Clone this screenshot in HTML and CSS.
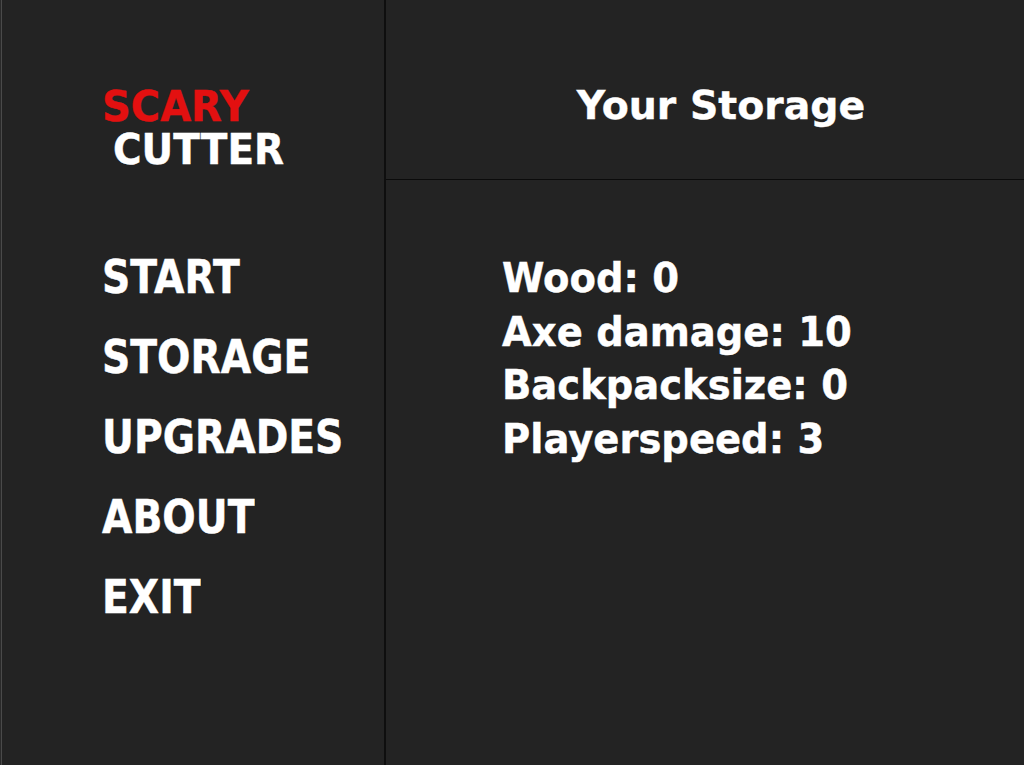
FILE: index.html
```html
<!DOCTYPE html>
<html lang="en">

<head>
  <meta charset="UTF-8" />
  <meta name="viewport" content="width=device-width, initial-scale=1.0" />
  <title>Scary Cutter - Storage</title>
  <link rel="stylesheet" href="styles.css">
</head>

<body>
  <div class="app">
    <div class="menu">
      <div class="logo">
        <span class="logo-top">SCARY</span>
        <span class="logo-bottom">CUTTER</span>
      </div>
      <ul class="menu-nav">
        <li><a href="javascript:;"><span>START</span></a></li>
        <li><a class="active" href="javascript:;"><span>STORAGE</span></a></li>
        <li><a href="javascript:;"><span>UPGRADES</span></a></li>
        <li><a href="javascript:;"><span>ABOUT</span></a></li>
        <li><a href="javascript:;"><span>EXIT</span></a></li>
      </ul>
    </div>
    <div class="main">
      <div class="main-head">
        <h2>Your Storage</h2>
      </div>
      <ul class="stats">
        <li><span>Wood: 0</span></li>
        <li><span>Axe damage: 10</span></li>
        <li><span>Backpacksize: 0</span></li>
        <li><span>Playerspeed: 3</span></li>
      </ul>
    </div>
  </div>
</body>

</html>
```

FILE: styles.css
```css
* {
  margin: 0;
  padding: 0;
}

body {
  background: #232323;
  color: #fff;
  font-family: "DejaVu Sans", Verdana, sans-serif;
  font-weight: bold;
  -webkit-text-stroke: 0.4px currentColor;
}

.app {
  display: flex;
  height: 765px;
}

/* left column */
.menu {
  width: 386px;
  flex-shrink: 0;
  border-right: 2px solid #0e0e0e;
  box-shadow: inset 1px 0 #2a2a2a, inset 2px 0 #4a4a4a;
  padding: 84px 0 0 102px;
  box-sizing: border-box;
}

.logo span {
  display: block;
  font-size: 40px;
  line-height: 44px;
  transform: scaleY(1.07);
  transform-origin: left center;
}

.logo .logo-top {
  color: #e31010;
}

.logo .logo-bottom {
  padding-left: 11px;
  font-size: 39px;
}

.menu-nav {
  list-style: none;
  margin-top: 66px;
}

.menu-nav li {
  height: 80px;
  line-height: 80px;
}

.menu-nav a {
  color: #fff;
  text-decoration: none;
  font-size: 39.3px;
}

.menu-nav a span {
  display: inline-block;
  transform: scaleY(1.18);
  transform-origin: left center;
}

/* right column */
.main {
  flex: 1;
}

.main-head {
  height: 180px;
  border-bottom: 1px solid #0b0b0b;
  padding: 82px 0 0 32px;
  box-sizing: border-box;
  text-align: center;
}

.main-head h2 {
  font-size: 39.4px;
  line-height: 46px;
}

.stats {
  list-style: none;
  padding: 71px 0 0 116px;
}

.stats li {
  height: 53.5px;
  line-height: 53.5px;
  font-size: 38.5px;
}

.stats li span {
  display: inline-block;
  transform: scaleY(1.07);
  transform-origin: left center;
}
```
